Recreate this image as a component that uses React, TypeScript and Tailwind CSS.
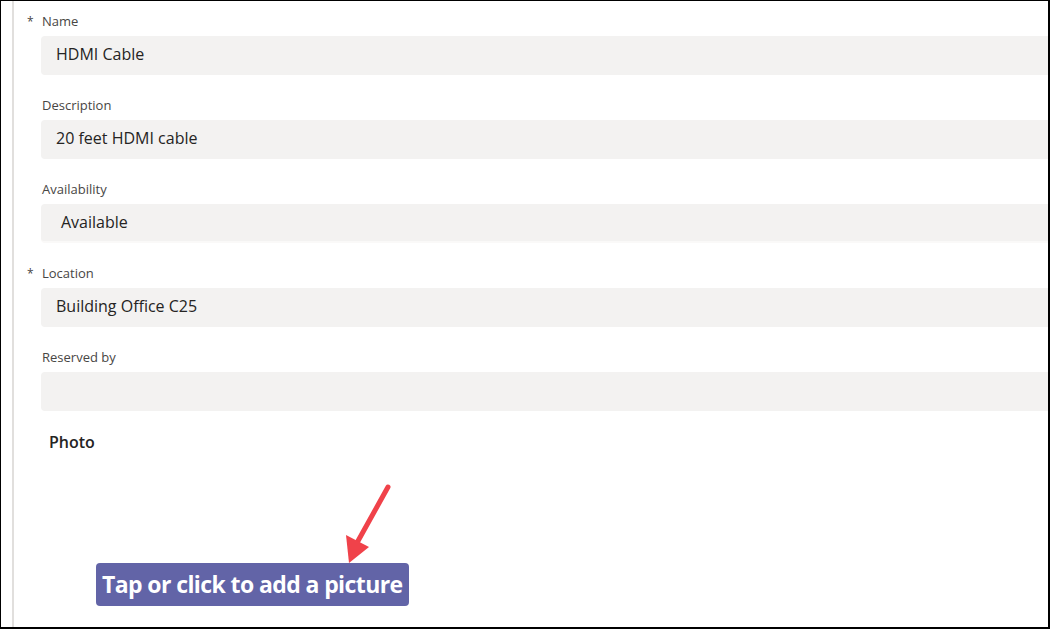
const fields = [
  { label: 'Name', value: 'HDMI Cable', required: true },
  { label: 'Description', value: '20 feet HDMI cable' },
  { label: 'Availability', value: 'Available', dropdown: true },
  { label: 'Location', value: 'Building Office C25', required: true },
  { label: 'Reserved by', value: '' },
];

function Field({ label, value, required, dropdown }: { label: string; value: string; required?: boolean; dropdown?: boolean }) {
  return (
    <div className="mb-[20px]">
      <div className="relative h-[20px] mb-[5px] pl-[28px] text-[13px] leading-[20px] text-[#484644]">
        {required && <span className="absolute left-[13px] top-[1px] text-[12px]">*</span>}
        {label}
      </div>
      <div
        className={
          dropdown
            ? 'ml-[27px] h-[39px] rounded-l-[4px] bg-[#f3f2f1] pl-[20px] text-[16px] leading-[37px] text-[#252423] border-b-2 border-[#faf9f8]'
            : 'ml-[27px] h-[39px] rounded-l-[4px] bg-[#f3f2f1] pl-[15px] text-[16px] leading-[37px] text-[#252423]'
        }
      >
        {value}
      </div>
    </div>
  );
}

export default function App() {
  return (
    <div
      className="w-[1050px] h-[629px] overflow-hidden bg-white border-t border-l border-r-2 border-b-2 border-black"
      style={{ fontFamily: '"Open Sans", "Noto Sans", sans-serif' }}
    >
      <div className="relative h-full ml-[11px] border-l-2 border-[#e1dfdd] pt-[10px]">
        {fields.map((f) => (
          <Field key={f.label} {...f} />
        ))}

        <div className="-mt-[1px] pl-[35px] text-[16px] font-semibold text-[#252423]">Photo</div>

        <div className="mt-[109px] ml-[82px] inline-flex h-[43px] items-center rounded-[4px] bg-[#6264a7] px-[6px] text-[23px] font-bold tracking-[-0.6px] text-white">
          Tap or click to add a picture
        </div>

        <svg className="absolute left-[322px] top-[478px]" width="60" height="90" viewBox="0 0 60 90">
          <line x1="52" y1="8" x2="22" y2="62" stroke="#f0424a" strokeWidth="5" strokeLinecap="round" />
          <polygon points="13,84 10,56 33,68" fill="#f0424a" />
        </svg>
      </div>
    </div>
  );
}
